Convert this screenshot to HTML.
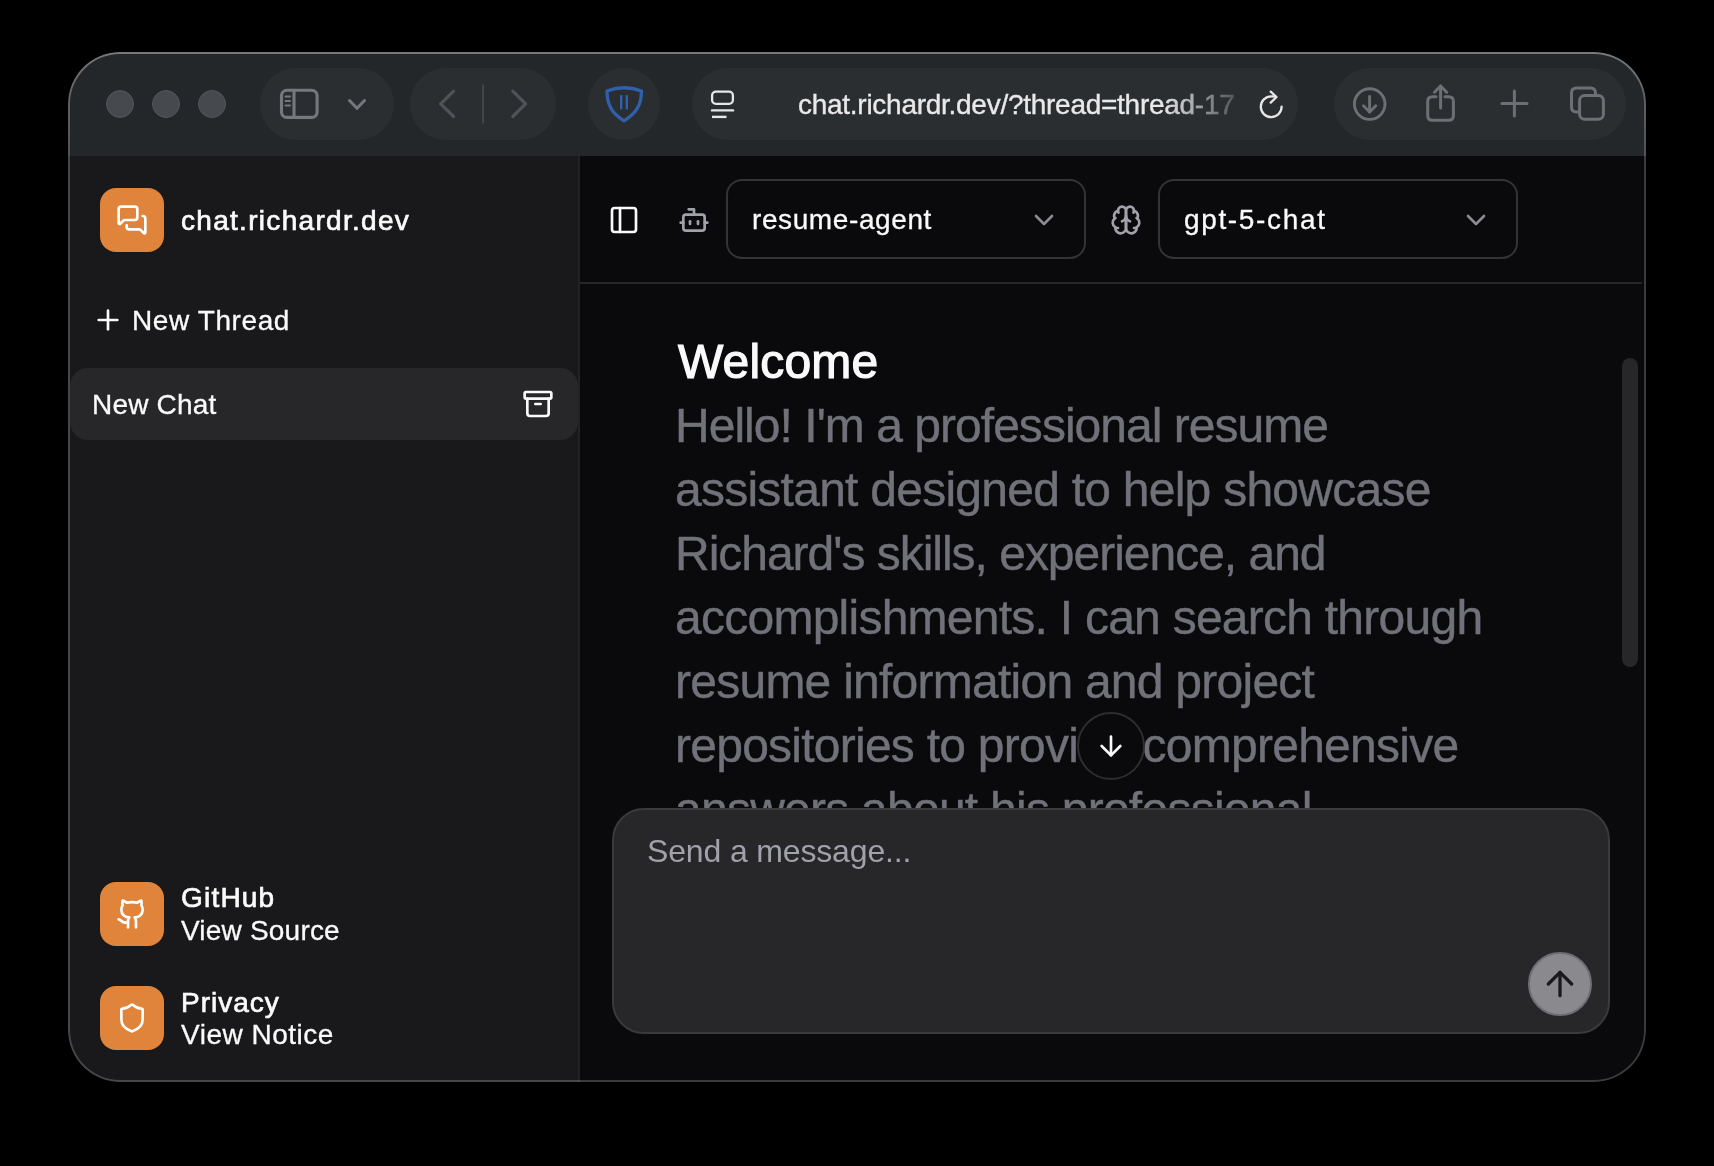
<!DOCTYPE html>
<html><head><meta charset="utf-8">
<style>
*{box-sizing:border-box;margin:0;padding:0}
html,body{width:1714px;height:1166px;background:#000;overflow:hidden}
body{font-family:"Liberation Sans",sans-serif;position:relative}
.abs{position:absolute}
#win{position:absolute;left:68px;top:52px;width:1578px;height:1030px;border-radius:52px;overflow:hidden;background:#0a0a0c}
#border{position:absolute;left:68px;top:52px;width:1578px;height:1030px;border-radius:52px;border:2.5px solid transparent;background:linear-gradient(180deg,rgba(255,255,255,0.38) 0,rgba(255,255,255,0.26) 50px,rgba(255,255,255,0.2) 110px) border-box;-webkit-mask:linear-gradient(#000 0 0) padding-box,linear-gradient(#000 0 0);-webkit-mask-composite:xor;mask-composite:exclude;pointer-events:none}
#toolbar{position:absolute;left:0;top:0;width:100%;height:104px;background:#24272a}
.tl{position:absolute;top:38px;width:28px;height:28px;border-radius:50%;background:#46494d;border:1px solid #53575b}
.pill{position:absolute;top:16px;height:72px;border-radius:36px;background:#2b2e31}
#sidebar{position:absolute;left:0;top:104px;width:512px;height:926px;background:#19191b;border-right:2px solid #222224}
#main{position:absolute;left:512px;top:104px;width:1066px;height:926px;background:#0a0a0c}
.t{position:absolute;white-space:pre;line-height:1;will-change:transform}
.rw{-webkit-text-stroke:0.3px #fafafa}
</style></head><body>
<div id="win">
  <div id="toolbar">
    <div class="tl" style="left:38px"></div>
    <div class="tl" style="left:84px"></div>
    <div class="tl" style="left:130px"></div>
    <div class="pill" style="left:192px;width:134px"></div>
    <div class="pill" style="left:342px;width:146px"></div>
    <div class="pill" style="left:520px;width:72px"></div>
    <div class="pill" style="left:623.6px;width:606.4px"></div>
    <div class="pill" style="left:1266.3px;width:291.4px"></div>
  </div>
  <div id="sidebar"></div>
  <div id="main"></div>
</div>

<svg class="abs" style="left:0;top:0" width="1714" height="1166" viewBox="0 0 1714 1166" fill="none" stroke-linecap="round" stroke-linejoin="round">
  <!-- sidebar icon -->
  <g stroke="#75797d" stroke-width="3.1">
    <rect x="281.5" y="90.2" width="35.6" height="27.2" rx="5.5"/>
    <line x1="294" y1="90.2" x2="294" y2="117.4"/>
  </g>
  <g stroke="#75797d" stroke-width="2">
    <line x1="285.5" y1="96.6" x2="290" y2="96.6"/>
    <line x1="285.5" y1="101" x2="290" y2="101"/>
    <line x1="285.5" y1="105.4" x2="290" y2="105.4"/>
  </g>
  <polyline points="349.5,100.5 357,108.3 364.5,100.5" stroke="#75797d" stroke-width="3"/>
  <!-- nav -->
  <polyline points="453.6,91.2 440.6,103.8 453.6,116.5" stroke="#4f5357" stroke-width="3.2"/>
  <polyline points="512.8,91.2 525.6,103.8 512.8,116.5" stroke="#4f5357" stroke-width="3.2"/>
  <line x1="483" y1="84.5" x2="483" y2="123.5" stroke="#42464a" stroke-width="2" stroke-linecap="butt"/>
  <!-- shield -->
  <path d="M607,91 Q624,84.5 641.5,91 C641.5,105 636,113.5 624,120.8 C612,113.5 607,105 607,91 Z" stroke="#3060ac" stroke-width="3.3"/>
  <line x1="621.2" y1="96" x2="621.2" y2="108.3" stroke="#3060ac" stroke-width="2.4"/>
  <line x1="626.8" y1="96" x2="626.8" y2="108.3" stroke="#3060ac" stroke-width="2.4"/>
  <!-- reader -->
  <rect x="712.1" y="91.7" width="20.8" height="12.2" rx="3.8" stroke="#e6e6e6" stroke-width="2.3"/>
  <line x1="712" y1="110.4" x2="733" y2="110.4" stroke="#e6e6e6" stroke-width="2.4"/>
  <line x1="712" y1="116.9" x2="726.5" y2="116.9" stroke="#e6e6e6" stroke-width="2.4" stroke-linecap="butt"/>
  <!-- reload -->
  <path d="M1281.6,106.6 A10.4,10.4 0 1 1 1271.2,96.3 L1275,96.5" stroke="#e6e6e6" stroke-width="2.3"/>
  <polyline points="1270.7,91.6 1276.5,97 1270.7,102.6" stroke="#e6e6e6" stroke-width="2.3"/>
  <!-- download -->
  <circle cx="1369.7" cy="104.1" r="15.3" stroke="#6c7074" stroke-width="2.9"/>
  <line x1="1369.6" y1="96.5" x2="1369.6" y2="112" stroke="#6c7074" stroke-width="2.9"/>
  <polyline points="1363.5,105.8 1369.6,112 1375.8,105.8" stroke="#6c7074" stroke-width="2.9"/>
  <!-- share -->
  <path d="M1436,96.7 L1432.5,96.7 Q1427.7,96.7 1427.7,101.5 L1427.7,115.5 Q1427.7,120.3 1432.5,120.3 L1448.5,120.3 Q1453.4,120.3 1453.4,115.5 L1453.4,101.5 Q1453.4,96.7 1448.5,96.7 L1445,96.7" stroke="#6c7074" stroke-width="3"/>
  <line x1="1440.6" y1="86" x2="1440.6" y2="108" stroke="#6c7074" stroke-width="3"/>
  <polyline points="1434.5,92.2 1440.6,86 1446.7,92.2" stroke="#6c7074" stroke-width="3"/>
  <!-- plus -->
  <line x1="1502" y1="103.5" x2="1527" y2="103.5" stroke="#6c7074" stroke-width="3"/>
  <line x1="1514.4" y1="91" x2="1514.4" y2="116" stroke="#6c7074" stroke-width="3"/>
  <!-- tabs -->
  <path d="M1579.6,112 L1576.5,112 Q1571.5,112 1571.5,107 L1571.5,93 Q1571.5,88 1576.5,88 L1590.5,88 Q1595.5,88 1595.5,93 L1595.5,95.5" stroke="#6c7074" stroke-width="3"/>
  <rect x="1579.6" y="95.5" width="23.8" height="23.7" rx="5" stroke="#6c7074" stroke-width="3"/>
</svg>
<div class="t" style="left:798px;top:91px;font-size:28px;color:#e9e9ea;letter-spacing:-0.27px;-webkit-text-stroke:0.35px #e9e9ea;-webkit-mask-image:linear-gradient(90deg,#000 0,#000 365px,rgba(0,0,0,0.22) 436px)">chat.richardr.dev/?thread=thread-17</div>

<!-- SIDEBAR -->
<div class="abs" style="left:100px;top:188px;width:64px;height:64px;border-radius:16px;background:#df843a"></div>
<svg class="abs" style="left:116px;top:204px" width="32" height="32" viewBox="0 0 24 24" fill="none" stroke="#fff" stroke-width="2" stroke-linecap="round" stroke-linejoin="round"><path d="M16 10a2 2 0 0 1-2 2H6.828a2 2 0 0 0-1.414.586l-2.202 2.202A.71.71 0 0 1 2 14.286V4a2 2 0 0 1 2-2h10a2 2 0 0 1 2 2z"/><path d="M20 9a2 2 0 0 1 2 2v10.286a.71.71 0 0 1-1.212.502l-2.202-2.202A2 2 0 0 0 17.172 19H10a2 2 0 0 1-2-2v-1"/></svg>
<div class="t" style="left:181px;top:207px;font-size:28px;color:#fafafa;-webkit-text-stroke:0.7px #fafafa;letter-spacing:1.3px">chat.richardr.dev</div>

<svg class="abs" style="left:92px;top:304px" width="32" height="32" viewBox="0 0 24 24" fill="none" stroke="#fafafa" stroke-width="2" stroke-linecap="round" stroke-linejoin="round"><path d="M5 12h14"/><path d="M12 5v14"/></svg>
<div class="t rw" style="left:132px;top:307px;font-size:28px;color:#fafafa;letter-spacing:0.6px">New Thread</div>

<div class="abs" style="left:70px;top:368px;width:508px;height:72px;border-radius:18px;background:#27272a"></div>
<div class="t rw" style="left:92px;top:391px;font-size:28px;color:#fafafa;letter-spacing:0.2px">New Chat</div>
<svg class="abs" style="left:522px;top:388px" width="32" height="32" viewBox="0 0 24 24" fill="none" stroke="#fafafa" stroke-width="2" stroke-linecap="round" stroke-linejoin="round"><rect width="20" height="5" x="2" y="3" rx="1"/><path d="M4 8v11a2 2 0 0 0 2 2h12a2 2 0 0 0 2-2V8"/><path d="M10 12h4"/></svg>

<div class="abs" style="left:100px;top:882px;width:64px;height:64px;border-radius:16px;background:#df843a"></div>
<svg class="abs" style="left:116px;top:898px" width="32" height="32" viewBox="0 0 24 24" fill="none" stroke="#fff" stroke-width="2" stroke-linecap="round" stroke-linejoin="round"><path d="M15 22v-4a4.8 4.8 0 0 0-1-3.5c3 0 6-2 6-5.5.08-1.25-.27-2.48-1-3.5.28-1.150.28-2.35 0-3.5 0 0-1 0-3 1.5-2.64-.5-5.360-.5-8 0C6 2 5 2 5 2c-.3 1.15-.3 2.35 0 3.5A5.403 5.403 0 0 0 4 9c0 3.5 3 5.5 6 5.5-.39.49-.68 1.05-.85 1.65-.17.6-.22 1.230-.15 1.85v4"/><path d="M9 18c-4.51 2-5-2-7-2"/></svg>
<div class="t" style="left:181px;top:884px;font-size:28px;color:#fafafa;-webkit-text-stroke:0.7px #fafafa;letter-spacing:1.2px">GitHub</div>
<div class="t rw" style="left:181px;top:917px;font-size:28px;color:#fafafa;letter-spacing:0.2px">View Source</div>

<div class="abs" style="left:100px;top:986px;width:64px;height:64px;border-radius:16px;background:#df843a"></div>
<svg class="abs" style="left:116px;top:1002px" width="32" height="32" viewBox="0 0 24 24" fill="none" stroke="#fff" stroke-width="2" stroke-linecap="round" stroke-linejoin="round"><path d="M20 13c0 5-3.5 7.5-7.66 8.95a1 1 0 0 1-.67-.01C7.5 20.5 4 18 4 13V6a1 1 0 0 1 1-1c2 0 4.5-1.2 6.24-2.72a1.17 1.17 0 0 1 1.52 0C14.51 3.81 17 5 19 5a1 1 0 0 1 1 1z"/></svg>
<div class="t" style="left:181px;top:989px;font-size:28px;color:#fafafa;-webkit-text-stroke:0.7px #fafafa;letter-spacing:1.0px">Privacy</div>
<div class="t rw" style="left:181px;top:1021px;font-size:28px;color:#fafafa;letter-spacing:0.5px">View Notice</div>

<!-- MAIN HEADER -->
<div class="abs" style="left:580px;top:282px;width:1062px;height:2px;background:#27272a"></div>
<svg class="abs" style="left:608px;top:204px" width="32" height="32" viewBox="0 0 24 24" fill="none" stroke="#fafafa" stroke-width="2" stroke-linecap="round" stroke-linejoin="round"><rect width="18" height="18" x="3" y="3" rx="2"/><path d="M9 3v18"/></svg>
<svg class="abs" style="left:678px;top:204px" width="32" height="32" viewBox="0 0 24 24" fill="none" stroke="#a1a1aa" stroke-width="2" stroke-linecap="round" stroke-linejoin="round"><path d="M12 8V4H8"/><rect width="16" height="12" x="4" y="8" rx="2"/><path d="M2 14h2"/><path d="M20 14h2"/><path d="M15 13v2"/><path d="M9 13v2"/></svg>
<div class="abs" style="left:726px;top:179px;width:360px;height:80px;border-radius:16px;border:2px solid #343436"></div>
<div class="t rw" style="left:752px;top:206px;font-size:28px;color:#fafafa;letter-spacing:0.6px">resume-agent</div>
<svg class="abs" style="left:1028px;top:204px" width="32" height="32" viewBox="0 0 24 24" fill="none" stroke="#8a8a90" stroke-width="2" stroke-linecap="round" stroke-linejoin="round"><path d="m6 9 6 6 6-6"/></svg>
<svg class="abs" style="left:1110px;top:204px" width="32" height="32" viewBox="0 0 24 24" fill="none" stroke="#a1a1aa" stroke-width="2" stroke-linecap="round" stroke-linejoin="round"><path d="M12 5a3 3 0 1 0-5.997.125 4 4 0 0 0-2.526 5.77 4 4 0 0 0 .556 6.588A4 4 0 1 0 12 18Z"/><path d="M12 5a3 3 0 1 1 5.997.125 4 4 0 0 1 2.526 5.77 4 4 0 0 1-.556 6.588A4 4 0 1 1 12 18Z"/><path d="M15 13a4.5 4.5 0 0 1-3-4 4.5 4.5 0 0 1-3 4"/><path d="M17.599 6.5a3 3 0 0 0 .399-1.375"/><path d="M6.003 5.125A3 3 0 0 0 6.401 6.5"/><path d="M3.477 10.896a4 4 0 0 1 .585-.396"/><path d="M19.938 10.5a4 4 0 0 1 .585.396"/><path d="M6 18a4 4 0 0 1-1.967-.516"/><path d="M19.967 17.484A4 4 0 0 1 18 18"/></svg>
<div class="abs" style="left:1158px;top:179px;width:360px;height:80px;border-radius:16px;border:2px solid #343436"></div>
<div class="t rw" style="left:1184px;top:206px;font-size:28px;color:#fafafa;letter-spacing:1.65px">gpt-5-chat</div>
<svg class="abs" style="left:1460px;top:204px" width="32" height="32" viewBox="0 0 24 24" fill="none" stroke="#8a8a90" stroke-width="2" stroke-linecap="round" stroke-linejoin="round"><path d="m6 9 6 6 6-6"/></svg>

<!-- CONTENT -->
<div class="abs" style="left:580px;top:284px;width:1065px;height:524px;overflow:hidden;will-change:transform">
  <div class="t" style="left:98px;top:54px;font-size:48px;color:#fafafa;-webkit-text-stroke:1.2px #fafafa;letter-spacing:0.15px">Welcome</div>
  <div class="abs" style="left:95px;top:110px;width:900px;font-size:48px;line-height:64px;color:#71717a;-webkit-text-stroke:0.4px #71717a;letter-spacing:-0.75px;white-space:pre"><span style="letter-spacing:-0.97px">Hello! I'm a professional resume</span>
assistant designed to help showcase
<span style="letter-spacing:-1.02px">Richard's skills, experience, and</span>
accomplishments. I can search through
resume information and project
repositories to provide comprehensive
answers about his professional</div>
</div>
<div class="abs" style="left:1622px;top:358px;width:16px;height:309px;border-radius:8px;background:#27272a"></div>
<div class="abs" style="left:1077px;top:712px;width:68px;height:68px;border-radius:50%;border:2px solid #2e2e31;background:#0a0a0c"></div>
<svg class="abs" style="left:1095px;top:730px" width="32" height="32" viewBox="0 0 24 24" fill="none" stroke="#fafafa" stroke-width="2" stroke-linecap="round" stroke-linejoin="round"><path d="M12 5v14"/><path d="m19 12-7 7-7-7"/></svg>

<!-- INPUT -->
<div class="abs" style="left:612px;top:808px;width:998px;height:226px;border-radius:32px;border:2px solid #3a3a3d;background:#27272a"></div>
<div class="t" style="left:647px;top:835px;font-size:32px;color:#a1a1aa;letter-spacing:-0.15px">Send a message...</div>
<div class="abs" style="left:1528px;top:952px;width:64px;height:64px;border-radius:50%;border:2px solid #6e6e74;background:#8a8a8e"></div>
<svg class="abs" style="left:1540px;top:964px" width="40" height="40" viewBox="0 0 24 24" fill="none" stroke="#1a1a1d" stroke-width="2" stroke-linecap="round" stroke-linejoin="round"><path d="m5 12 7-7 7 7"/><path d="M12 19V5"/></svg>
<div id="border"></div>
</body></html>
